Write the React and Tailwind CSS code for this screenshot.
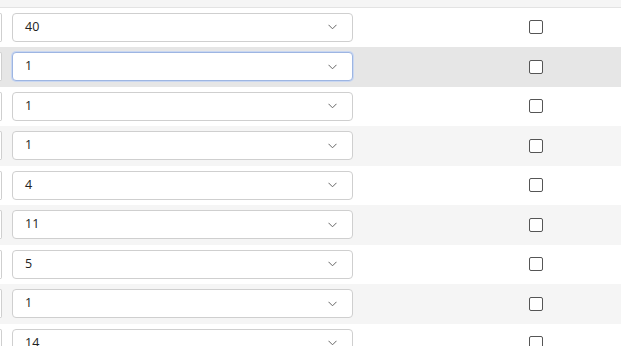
import React from 'react';

const rows = [
    { value: '40', bg: 'bg-white' },
    { value: '1', bg: 'bg-[#e6e6e6]', focused: true },
    { value: '1', bg: 'bg-white' },
    { value: '1', bg: 'bg-[#f5f5f5]' },
    { value: '4', bg: 'bg-white' },
    { value: '11', bg: 'bg-[#f5f5f5]' },
    { value: '5', bg: 'bg-white' },
    { value: '1', bg: 'bg-[#f5f5f5]' },
    { value: '14', bg: 'bg-white' },
];

const Chevron = () => (
    <svg width="9" height="6" viewBox="0 0 9 6" fill="none" className="shrink-0">
        <path d="M0.5 0.8 L4.5 4.8 L8.5 0.8" stroke="#666" strokeWidth="1" />
    </svg>
);

const App = () => {
    return (
        <div
            className="w-[621px] h-[346px] overflow-hidden bg-white"
            style={{ fontFamily: '"Segoe UI", "Open Sans", "Noto Sans", sans-serif' }}
        >
            {/* header strip */}
            <div className="h-[7.5px] bg-[#f5f5f5] border-b border-[#e3e3e3]" />

            {rows.map((row, i) => (
                <div key={i} className={`flex items-center h-[39.5px] ${row.bg}`}>
                    {/* previous column edge */}
                    <div className="w-[2px] h-[29px] border-r border-y border-[#cfcfcf] rounded-r-[4px] bg-white" />

                    <div className="pl-[10px]">
                        <div
                            className={`w-[341px] h-[29px] flex items-center justify-between pl-[12px] pr-[15px] rounded-[4px] bg-white text-[12.5px] text-[#222] ${
                                row.focused ? 'border border-[#9db5e2] shadow-[0_0_0_1px_#c9d7f1]' : 'border border-[#cfcfcf]'
                            }`}
                        >
                            <span>{row.value}</span>
                            <Chevron />
                        </div>
                    </div>

                    <div className="ml-[176px]">
                        <div className="w-[14px] h-[14px] rounded-[2px] border border-[#555] bg-white" />
                    </div>
                </div>
            ))}
        </div>
    );
};

export default App;
